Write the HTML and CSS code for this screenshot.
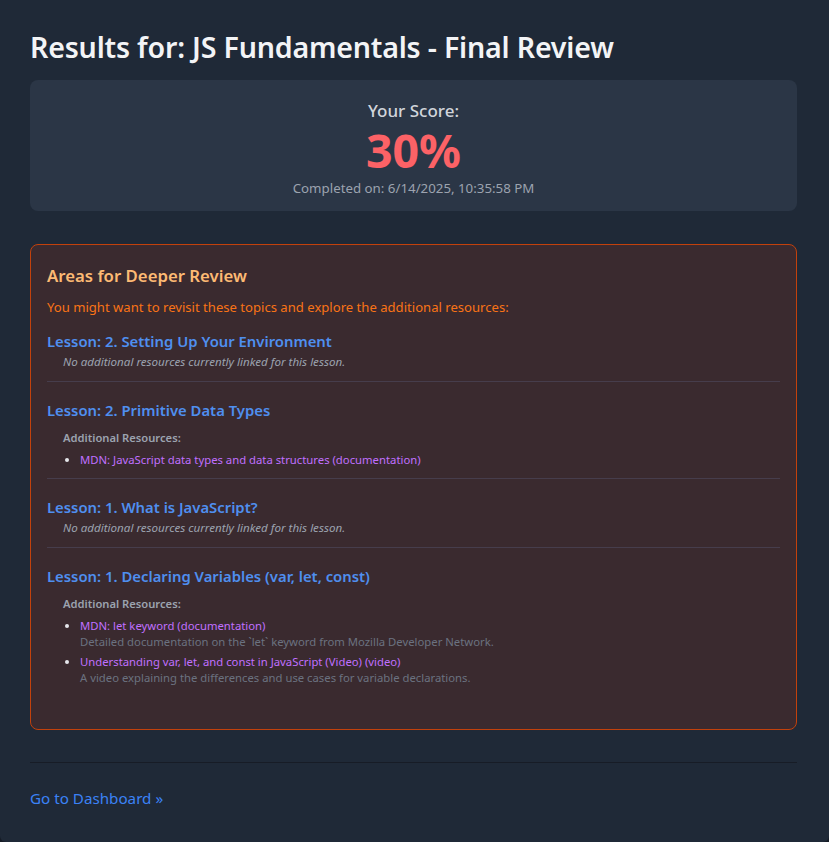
FILE: index.html
```html
<!DOCTYPE html>
<html lang="en">
<head>
<meta charset="utf-8">
<title>Results</title>
<link rel="stylesheet" href="styles.css">
</head>
<body>
<div class="page">
  <h1 class="page-title">Results for: JS Fundamentals - Final Review</h1>

  <section class="score-card">
    <div class="score-label">Your Score:</div>
    <div class="score-value">30%</div>
    <div class="score-date">Completed on: 6/14/2025, 10:35:58 PM</div>
  </section>

  <section class="review">
    <h2 class="review-title">Areas for Deeper Review</h2>
    <p class="review-intro">You might want to revisit these topics and explore the additional resources:</p>

    <div class="lesson">
      <h3 class="lesson-title">Lesson: 2. Setting Up Your Environment</h3>
      <p class="no-res">No additional resources currently linked for this lesson.</p>
    </div>

    <div class="lesson">
      <h3 class="lesson-title">Lesson: 2. Primitive Data Types</h3>
      <div class="res-block">
        <div class="res-head">Additional Resources:</div>
        <ul class="res-list">
          <li><a class="res-link" href="#">MDN: JavaScript data types and data structures (documentation)</a></li>
        </ul>
      </div>
    </div>

    <div class="lesson">
      <h3 class="lesson-title">Lesson: 1. What is JavaScript?</h3>
      <p class="no-res">No additional resources currently linked for this lesson.</p>
    </div>

    <div class="lesson last">
      <h3 class="lesson-title">Lesson: 1. Declaring Variables (var, let, const)</h3>
      <div class="res-block">
        <div class="res-head">Additional Resources:</div>
        <ul class="res-list">
          <li><a class="res-link" href="#">MDN: let keyword (documentation)</a><div class="res-desc">Detailed documentation on the `let` keyword from Mozilla Developer Network.</div></li>
          <li><a class="res-link" href="#">Understanding var, let, and const in JavaScript (Video) (video)</a><div class="res-desc">A video explaining the differences and use cases for variable declarations.</div></li>
        </ul>
      </div>
    </div>
  </section>

  <footer class="footer">
    <a class="dash-link" href="#">Go to Dashboard »</a>
  </footer>
</div>
</body>
</html>
```
FILE: styles.css
```css
* { box-sizing: border-box; }
html, body { margin: 0; padding: 0; }
body {
  background: #151b25;
  font-family: "Noto Sans", "Open Sans", sans-serif;
}
.page {
  background: #1f2937;
  min-height: 842px;
  border-radius: 0 0 6px 6px;
  padding: 26px 32px 30px 30px;
}
.page-title {
  margin: 0 0 12px;
  font-size: 28.6px;
  font-weight: 600;
  line-height: 42px;
  color: #f3f4f6;
  letter-spacing: -0.2px;
}
.score-card {
  background: #2b3646;
  border-radius: 8px;
  height: 131px;
  padding-top: 20px;
  text-align: center;
}
.score-label {
  font-size: 17px;
  color: #d1d5db;
  font-weight: 500;
  line-height: 22px;
}
.score-value {
  font-size: 46.5px;
  font-weight: 700;
  color: #fc6266;
  line-height: 57px;
}
.score-date {
  font-size: 13.3px;
  color: #9ca3af;
  line-height: 18px;
}
.review {
  margin-top: 33px;
  background: #3a2a2f;
  border: 1px solid #c2410c;
  border-radius: 8px;
  padding: 18px 16px 43px;
}
.review-title {
  margin: 0;
  font-size: 16.75px;
  font-weight: 600;
  color: #fdba74;
  line-height: 26px;
}
.review-intro {
  margin: 8px 0 12px;
  font-size: 13.1px;
  color: #f97316;
  line-height: 20px;
}
.lesson {
  border-bottom: 1px solid #463d4c;
  padding-bottom: 10px;
  margin-bottom: 16px;
}
.lesson.last { border-bottom: none; margin-bottom: 0; padding-bottom: 0; }
.lesson-title {
  margin: 0;
  font-size: 14.85px;
  font-weight: 600;
  color: #4f8fef;
  line-height: 24px;
}
.no-res {
  margin: 0 0 0 16px;
  font-size: 11.6px;
  font-style: italic;
  color: #9ca3af;
  line-height: 18px;
}
.res-block { margin: 7px 0 0 16px; }
.res-head {
  font-size: 11.2px;
  font-weight: 600;
  color: #9ca3af;
  line-height: 18px;
}
.res-list {
  margin: 5px 0 0;
  padding-left: 17px;
  list-style: disc;
  color: #e5e7eb;
}
.res-list li {
  font-size: 11.3px;
  line-height: 16px;
  margin-bottom: 4px;
}
.res-list li:last-child { margin-bottom: 0; }
.res-link {
  color: #c070ff;
  text-decoration: none;
}
.res-desc {
  color: #6b7280;
  font-size: 11.3px;
  line-height: 16px;
}
.footer {
  margin-top: 32px;
  border-top: 1px solid #171c26;
  padding-top: 24px;
}
.dash-link {
  color: #3b82f6;
  text-decoration: none;
  font-size: 15.2px;
  line-height: 22px;
}
```
